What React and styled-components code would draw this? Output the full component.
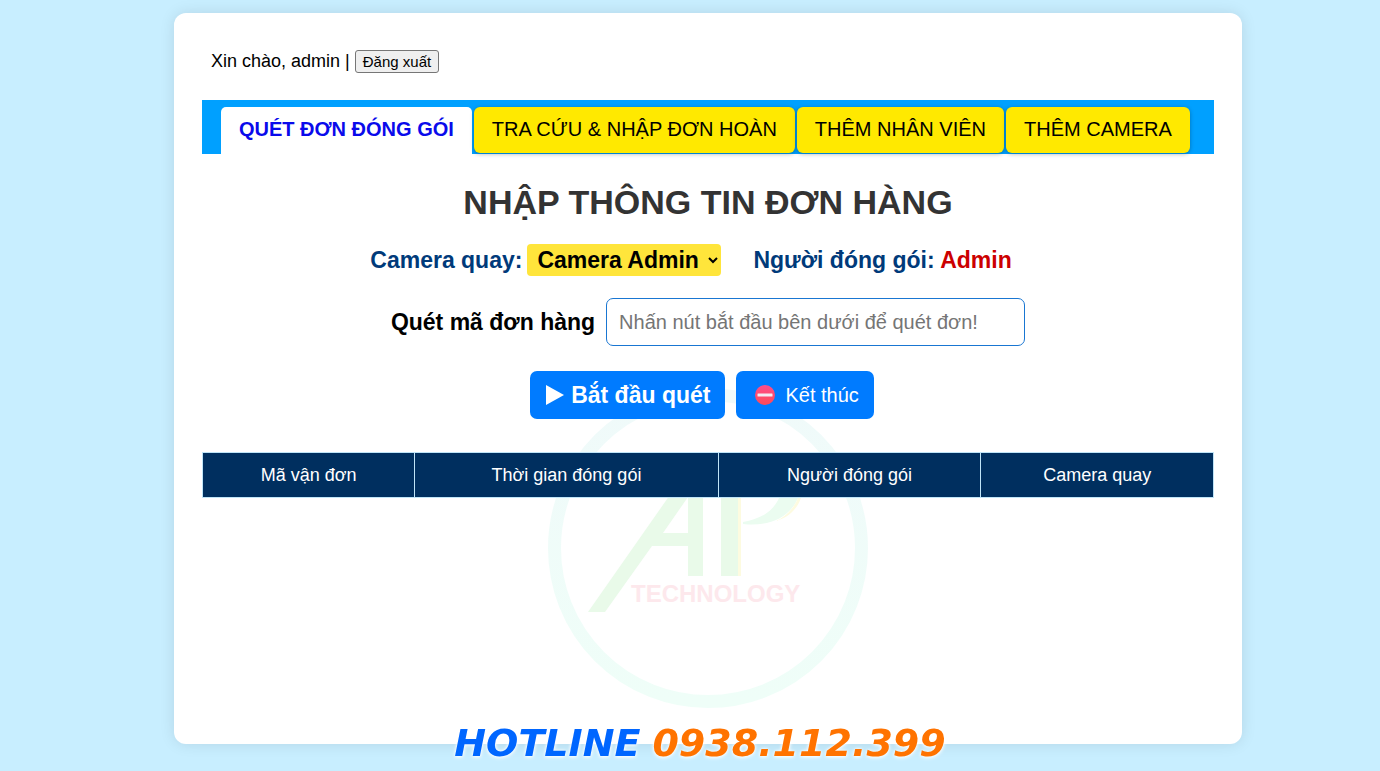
import React, { useState } from 'react';
import styled, { createGlobalStyle } from 'styled-components';

const GlobalStyle = createGlobalStyle`
  * {
    box-sizing: border-box;
  }

  body {
    margin: 0;
    background: #c8eeff;
    font-family: Arial, 'Liberation Sans', sans-serif;
    color: #000;
  }
`;

// Styled Components
const Page = styled.div`
  padding: 13px 0 27px 36px;
`;

const Card = styled.main`
  position: relative;
  z-index: 0;
  width: calc(100% - 40px);
  max-width: 1068px;
  min-height: calc(100vh - 40px);
  margin: 0 auto;
  padding: 36px 28px;
  background: #fff;
  border-radius: 12px;
  box-shadow: 0 0 15px rgba(0, 0, 0, 0.1);
`;

const Watermark = styled.svg`
  position: absolute;
  z-index: -1;
  bottom: 36px;
  left: 50%;
  width: 320px;
  height: 320px;
  transform: translateX(-50%);
`;

const UserBar = styled.div`
  display: flex;
  align-items: center;
  gap: 5px;
  height: 24px;
  margin-bottom: 27px;
  padding-left: 9px;
  font-size: 18px;
`;

const LogoutButton = styled.button`
  height: 23px;
  padding: 0 7px;
  background: #efefef;
  border: 1px solid #767676;
  border-radius: 3px;
  color: #000;
  font-family: inherit;
  font-size: 15px;
`;

const Tabs = styled.nav`
  display: flex;
  gap: 2px;
  padding: 7px 19px 0;
  background: #00a0ff;
`;

const Tab = styled.button`
  height: ${(props) => (props.$active ? '47px' : '46px')};
  padding: 0 18px 2px;
  background: ${(props) => (props.$active ? '#fff' : '#ffe900')};
  border: none;
  border-radius: ${(props) => (props.$active ? '5px 5px 0 0' : '6px')};
  box-shadow: ${(props) =>
    props.$active ? 'none' : '0 1px 4px rgba(0, 0, 0, 0.3)'};
  color: ${(props) => (props.$active ? '#0a0aeb' : '#000')};
  cursor: pointer;
  font-family: inherit;
  font-size: 20px;
  font-weight: ${(props) => (props.$active ? 'bold' : 'normal')};
  white-space: nowrap;
`;

const Title = styled.h1`
  margin: 27px 0 21px;
  color: #333;
  font-size: 34px;
  line-height: 42px;
  text-align: center;
`;

const InfoRow = styled.div`
  display: flex;
  justify-content: center;
  align-items: center;
  gap: 32px;
  margin-bottom: 22px;
  padding-right: 34px;
  color: #003a7a;
  font-size: 23px;
  font-weight: bold;
`;

const CameraLabel = styled.label`
  display: flex;
  align-items: center;
  gap: 5px;
`;

const CameraSelect = styled.select`
  width: 194px;
  height: 32px;
  padding: 0 0 0 6px;
  background: #ffe53b;
  border: none;
  border-radius: 4px;
  color: #000;
  font-family: inherit;
  font-size: 23px;
  font-weight: bold;
`;

const PackerName = styled.span`
  color: #cc0000;
`;

const ScanForm = styled.div`
  display: flex;
  justify-content: center;
  align-items: center;
  gap: 11px;
  margin-bottom: 25px;
`;

const ScanLabel = styled.label`
  font-size: 23px;
  font-weight: bold;
`;

const ScanInput = styled.input`
  width: 419px;
  height: 48px;
  padding: 0 12px;
  background: #fff;
  border: 1px solid #1976d2;
  border-radius: 7px;
  font-family: inherit;
  font-size: 20px;

  &::placeholder {
    color: #757575;
  }
`;

const Actions = styled.div`
  display: flex;
  justify-content: center;
  gap: 11px;
  margin-bottom: 33px;
  padding-right: 12px;
`;

const ActionButton = styled.button`
  display: flex;
  align-items: center;
  gap: ${(props) => (props.$primary ? '6px' : '8px')};
  height: 48px;
  padding: 0 15px;
  background: #007bff;
  border: none;
  border-radius: 7px;
  color: #fff;
  cursor: pointer;
  font-family: inherit;
  font-size: ${(props) => (props.$primary ? '23px' : '20px')};
  font-weight: ${(props) => (props.$primary ? 'bold' : 'normal')};
`;

const OrderTable = styled.table`
  width: 100%;
  border-collapse: collapse;
`;

const HeadCell = styled.th`
  width: ${(props) => props.$width};
  height: 45px;
  padding: 0 8px;
  background: #002f5f;
  border: 1px solid #bfe4f7;
  color: #fff;
  font-size: 18px;
  font-weight: normal;
`;

const Hotline = styled.div`
  position: fixed;
  bottom: 7px;
  left: 20px;
  right: 0;
  display: flex;
  justify-content: center;
  gap: 12px;
  color: #ff7300;
  font-family: Verdana, 'DejaVu Sans', sans-serif;
  font-size: 38px;
  font-style: italic;
  font-weight: bold;
  line-height: 42px;
  text-shadow: 0 0 3px #fff, 0 1px 4px #fff;
  pointer-events: none;
`;

const HotlineLabel = styled.span`
  color: #0066ff;
`;

const tabs = [
  'QUÉT ĐƠN ĐÓNG GÓI',
  'TRA CỨU & NHẬP ĐƠN HOÀN',
  'THÊM NHÂN VIÊN',
  'THÊM CAMERA',
];

const columns = [
  { name: 'Mã vận đơn', width: '21%' },
  { name: 'Thời gian đóng gói', width: '30%' },
  { name: 'Người đóng gói', width: '26%' },
  { name: 'Camera quay', width: '23%' },
];

const Logo = () => (
  <Watermark viewBox="0 0 320 320" aria-hidden="true">
    <defs>
      <linearGradient id="ring" x1="0" y1="0" x2="0" y2="1">
        <stop offset="0" stopColor="#f0fafa" />
        <stop offset="1" stopColor="#effef8" />
      </linearGradient>
    </defs>
    <circle cx="160" cy="160" r="153.5" fill="none" stroke="url(#ring)" strokeWidth="13" />
    <path
      d="M40 224 L131 94 H155 V188 H140 V158 H104 L57 224 Z M115 145 H140 V109 Z"
      fill="#e9fae9"
      fillRule="evenodd"
    />
    <path d="M173 80 H190 V188 H173 Z" fill="#e9fae9" />
    <path d="M190 80 H193 V188 H190 Z" fill="#fdfbe0" />
    <path d="M195 134 C214 131 226 122 231 110 L250 110 C242 129 222 139 195 136 Z" fill="#ebfcf0" />
    <path d="M250 110 C245 122 237 129 228 133 C239 130 249 122 253 110 Z" fill="#fdfbe0" />
    <text
      x="83"
      y="214"
      fill="#fde8ec"
      fontFamily="Arial, 'Liberation Sans', sans-serif"
      fontSize="24"
      fontWeight="bold"
    >
      TECHNOLOGY
    </text>
  </Watermark>
);

const PlayIcon = () => (
  <svg width="20" height="20" viewBox="0 0 20 20" aria-hidden="true">
    <path d="M1 0 L19 10 L1 20 Z" fill="#fff" />
  </svg>
);

const StopIcon = () => (
  <svg width="26" height="20" viewBox="0 0 26 20" aria-hidden="true">
    <defs>
      <linearGradient id="stop" x1="0" y1="0" x2="0" y2="1">
        <stop offset="0" stopColor="#ff4d8b" />
        <stop offset="1" stopColor="#fd4a58" />
      </linearGradient>
    </defs>
    <circle cx="14" cy="10" r="10" fill="url(#stop)" />
    <rect x="6.5" y="8.5" width="15" height="3" rx="0.5" fill="#f4eaf4" />
  </svg>
);

// Functional Component
const App = () => {
  const [activeTab, setActiveTab] = useState(0);
  const [orderCode, setOrderCode] = useState('');

  return (
    <>
      <GlobalStyle />
      <Page>
        <Card>
          <Logo />
          <UserBar>
            <span>Xin chào, admin |</span>
            <LogoutButton type="button">Đăng xuất</LogoutButton>
          </UserBar>

          <Tabs>
            {tabs.map((tab, index) => (
              <Tab
                key={tab}
                type="button"
                $active={index === activeTab}
                onClick={() => setActiveTab(index)}
              >
                {tab}
              </Tab>
            ))}
          </Tabs>

          <Title>NHẬP THÔNG TIN ĐƠN HÀNG</Title>

          <InfoRow>
            <CameraLabel>
              Camera quay:
              <CameraSelect>
                <option>Camera Admin</option>
              </CameraSelect>
            </CameraLabel>
            <span>
              Người đóng gói: <PackerName>Admin</PackerName>
            </span>
          </InfoRow>

          <ScanForm>
            <ScanLabel htmlFor="order-code">Quét mã đơn hàng</ScanLabel>
            <ScanInput
              id="order-code"
              type="text"
              placeholder="Nhấn nút bắt đầu bên dưới để quét đơn!"
              value={orderCode}
              onChange={(e) => setOrderCode(e.target.value)}
            />
          </ScanForm>

          <Actions>
            <ActionButton type="button" $primary>
              <PlayIcon />
              Bắt đầu quét
            </ActionButton>
            <ActionButton type="button">
              <StopIcon />
              Kết thúc
            </ActionButton>
          </Actions>

          <OrderTable>
            <thead>
              <tr>
                {columns.map((column) => (
                  <HeadCell key={column.name} scope="col" $width={column.width}>
                    {column.name}
                  </HeadCell>
                ))}
              </tr>
            </thead>
          </OrderTable>
        </Card>
      </Page>
      <Hotline>
        <HotlineLabel>HOTLINE</HotlineLabel>
        <span>0938.112.399</span>
      </Hotline>
    </>
  );
};

export default App;
